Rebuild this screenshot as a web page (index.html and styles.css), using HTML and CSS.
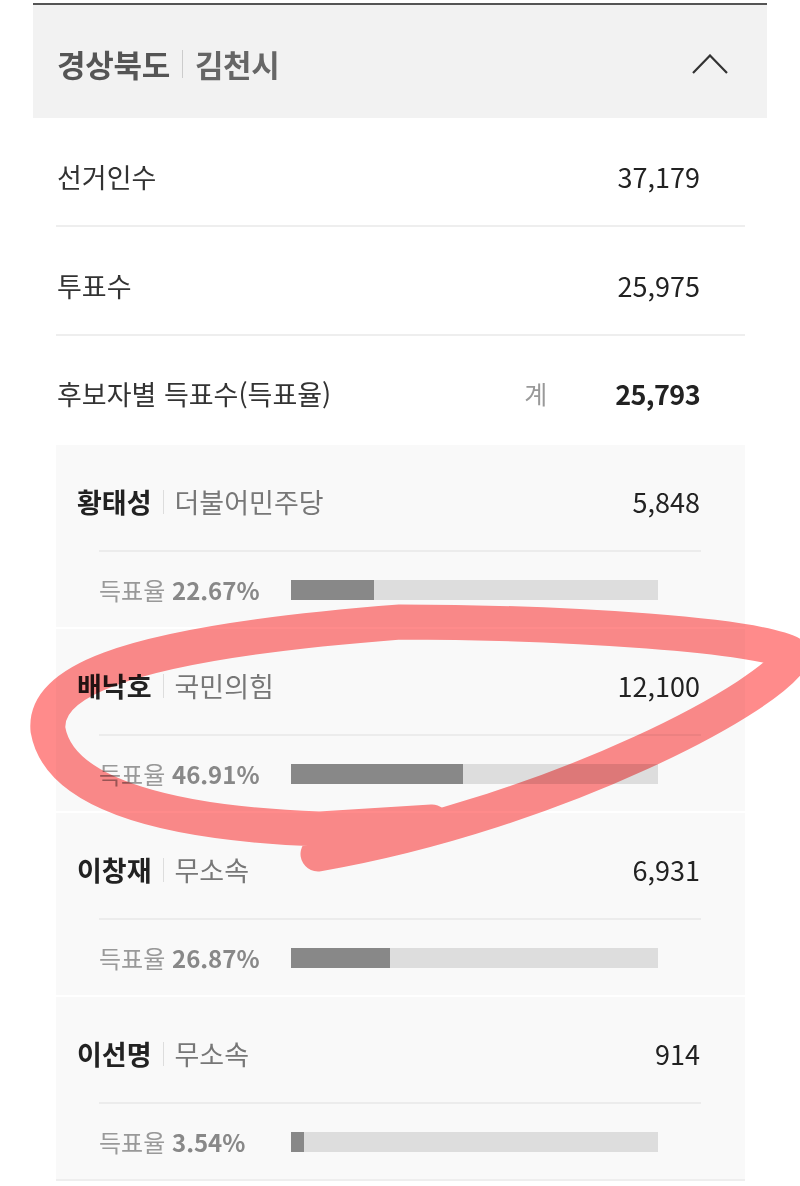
FILE: index.html
```html
<!DOCTYPE html>
<html lang="ko">
<head>
<meta charset="utf-8">
<title>경상북도 김천시</title>
<link rel="stylesheet" href="styles.css">
</head>
<body>
<div class="panel">
  <div class="head">
    <div class="title"><span class="prov">경상북도</span><span class="hsep"></span><span class="city">김천시</span></div>
    <svg class="chev" width="36" height="20" viewBox="0 0 36 20"><path d="M1 19 L18 1.5 L35 19" fill="none" stroke="#333" stroke-width="2.2"/></svg>
  </div>
  <div class="body">
    <div class="row"><span class="label">선거인수</span><span class="num">37,179</span></div>
    <div class="row"><span class="label">투표수</span><span class="num">25,975</span></div>
    <div class="row row-last"><span class="label">후보자별 득표수(득표율)</span><span class="sum"><span class="gye">계</span><span class="num bold">25,793</span></span></div>
    <div class="cands">
      <div class="cand">
        <div class="cand-top"><span class="name">황태성</span><span class="csep"></span><span class="party">더불어민주당</span><span class="num push">5,848</span></div>
        <div class="cand-line"></div>
        <div class="cand-bot"><span class="pct">득표율 <b>22.67%</b></span><div class="track"><div class="fill" style="width:22.67%"></div></div></div>
      </div>
      <div class="cand">
        <div class="cand-top"><span class="name">배낙호</span><span class="csep"></span><span class="party">국민의힘</span><span class="num push">12,100</span></div>
        <div class="cand-line"></div>
        <div class="cand-bot"><span class="pct">득표율 <b>46.91%</b></span><div class="track"><div class="fill" style="width:46.91%"></div></div></div>
      </div>
      <div class="cand">
        <div class="cand-top"><span class="name">이창재</span><span class="csep"></span><span class="party">무소속</span><span class="num push">6,931</span></div>
        <div class="cand-line"></div>
        <div class="cand-bot"><span class="pct">득표율 <b>26.87%</b></span><div class="track"><div class="fill" style="width:26.87%"></div></div></div>
      </div>
      <div class="cand cand-end">
        <div class="cand-top"><span class="name">이선명</span><span class="csep"></span><span class="party">무소속</span><span class="num push">914</span></div>
        <div class="cand-line"></div>
        <div class="cand-bot"><span class="pct">득표율 <b>3.54%</b></span><div class="track"><div class="fill" style="width:3.54%"></div></div></div>
      </div>
    </div>
  </div>
</div>
<svg class="marker" width="800" height="1186" viewBox="0 0 800 1186">
  <path d="M432 822 L320 829 C180 824 60 798 48 730 C44 688 100 645 400 622 C560 622 770 635 793 655 C780 692 560 812 318 854" fill="none" stroke="#ff8b8b" stroke-width="35" stroke-linecap="round" stroke-linejoin="round"/>
</svg>
</body>
</html>
```
FILE: styles.css
```css
* { box-sizing: border-box; }
body {
  margin: 0;
  background: #fff;
  font-family: "Noto Sans CJK KR", "Noto Sans", sans-serif;
  position: relative;
  width: 800px;
  height: 1186px;
  overflow: hidden;
}
.panel {
  width: 734px;
  margin: 3px 0 0 33px;
}
.head {
  height: 115px;
  border-top: 2px solid #555;
  background: #f2f2f2;
  display: flex;
  align-items: center;
  justify-content: space-between;
  padding: 4px 39px 0 24px;
}
.title {
  display: flex;
  align-items: center;
  font-size: 31px;
  font-weight: 700;
  line-height: 1;
  letter-spacing: -0.3px;
}
.prov { color: #555; }
.city { color: #666; }
.hsep {
  width: 1px;
  height: 28px;
  background: #ccc;
  margin: 0 12px;
}
.chev { display: block; }
.body {
  padding: 0 22px 0 23px;
}
.row {
  height: 109px;
  display: flex;
  align-items: center;
  justify-content: space-between;
  border-bottom: 2px solid #eee;
  padding: 10px 45px 0 1px;
  font-size: 27px;
  color: #333;
  line-height: 1;
}
.row-last { border-bottom: none; padding-top: 6px; }
.num { color: #222; font-size: 27px; }
.bold { font-weight: 700; letter-spacing: -0.6px; }
.sum { display: flex; align-items: center; }
.gye { color: #999; font-size: 25px; margin-right: 68px; }
.cands { background: #f9f9f9; }
.cand { border-bottom: 2px solid #fff; }
.cand-end { border-bottom: 2px solid #eee; }
.cand-top {
  height: 105px;
  display: flex;
  align-items: center;
  padding: 8px 45px 0 21px;
  font-size: 27px;
  line-height: 1;
}
.name { font-weight: 700; color: #222; }
.csep {
  width: 1px;
  height: 24px;
  background: #ddd;
  margin: 0 11px;
}
.party { color: #777; }
.push { margin-left: auto; }
.cand-line {
  height: 2px;
  background: #ececec;
  margin: 0 44px 0 43px;
}
.cand-bot {
  height: 75px;
  display: flex;
  align-items: center;
  padding-left: 43px;
}
.pct {
  width: 192px;
  font-size: 24px;
  color: #999;
  line-height: 1;
}
.pct b { color: #888; font-weight: 700; }
.track {
  width: 367px;
  height: 20px;
  background: #ddd;
}
.fill {
  height: 100%;
  background: #888;
}
.marker {
  position: absolute;
  left: 0;
  top: 0;
  pointer-events: none;
  mix-blend-mode: multiply;
}
```
